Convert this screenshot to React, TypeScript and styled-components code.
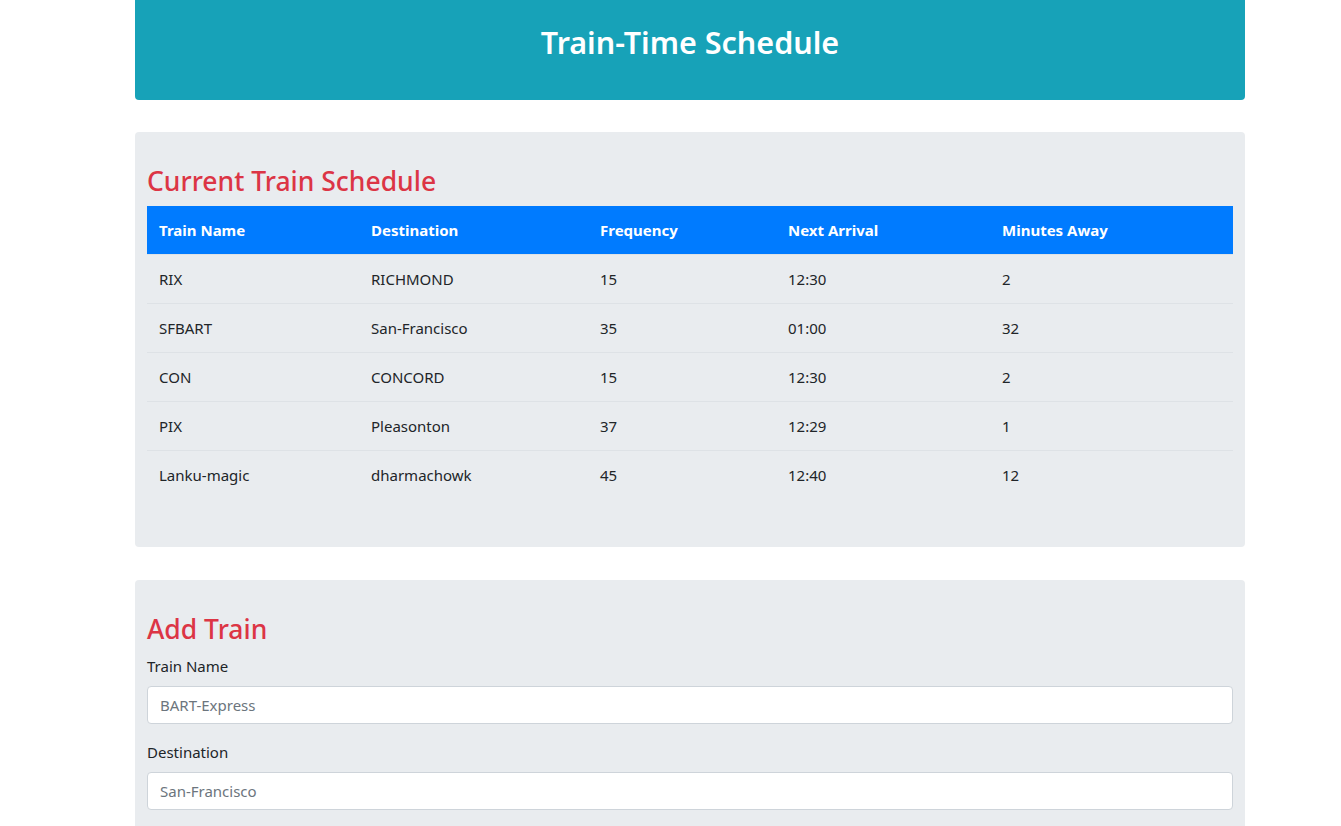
import styled, { createGlobalStyle } from 'styled-components';

interface Train {
  name: string;
  destination: string;
  frequency: number;
  nextArrival: string;
  minutesAway: number;
}

const trains: Train[] = [
  { name: 'RIX', destination: 'RICHMOND', frequency: 15, nextArrival: '12:30', minutesAway: 2 },
  { name: 'SFBART', destination: 'San-Francisco', frequency: 35, nextArrival: '01:00', minutesAway: 32 },
  { name: 'CON', destination: 'CONCORD', frequency: 15, nextArrival: '12:30', minutesAway: 2 },
  { name: 'PIX', destination: 'Pleasonton', frequency: 37, nextArrival: '12:29', minutesAway: 1 },
  { name: 'Lanku-magic', destination: 'dharmachowk', frequency: 45, nextArrival: '12:40', minutesAway: 12 },
];

const columns = [
  { label: 'Train Name', width: 212 },
  { label: 'Destination', width: 229 },
  { label: 'Frequency', width: 188 },
  { label: 'Next Arrival', width: 214 },
  { label: 'Minutes Away', width: 243 },
];

export default function App() {
  return (
    <>
      <GlobalStyle />
      <Page>
        <Header>
          <Title>Train-Time Schedule</Title>
        </Header>

        <Jumbotron>
          <SectionTitle>Current Train Schedule</SectionTitle>
          <Table>
            <colgroup>
              {columns.map((c) => (
                <col key={c.label} width={c.width} />
              ))}
            </colgroup>
            <thead>
              <tr>
                {columns.map((c) => (
                  <Th key={c.label}>{c.label}</Th>
                ))}
              </tr>
            </thead>
            <tbody>
              {trains.map((t) => (
                <tr key={t.name}>
                  <Td>{t.name}</Td>
                  <Td>{t.destination}</Td>
                  <Td>{t.frequency}</Td>
                  <Td>{t.nextArrival}</Td>
                  <Td>{t.minutesAway}</Td>
                </tr>
              ))}
            </tbody>
          </Table>
        </Jumbotron>

        <Jumbotron>
          <SectionTitle>Add Train</SectionTitle>
          <FormGroup>
            <Label htmlFor="trainName">Train Name</Label>
            <Input id="trainName" placeholder="BART-Express" />
          </FormGroup>
          <FormGroup>
            <Label htmlFor="destination">Destination</Label>
            <Input id="destination" placeholder="San-Francisco" />
          </FormGroup>
        </Jumbotron>
      </Page>
    </>
  );
}

const GlobalStyle = createGlobalStyle`
  body {
    margin: 0;
    background: #fff;
    color: #212529;
    font-family: "Noto Sans", "Open Sans", sans-serif;
    font-size: 15px;
    line-height: 1.5;
  }
  * {
    box-sizing: border-box;
  }
`;

const Page = styled.div`
  width: 1110px;
  margin-left: 135px;
  padding-bottom: 32px;
`;

const Header = styled.header`
  height: 100px;
  background-color: #17a2b8;
  border-radius: 0 0 4px 4px;
  display: flex;
  align-items: center;
  justify-content: center;
`;

const Title = styled.h1`
  margin: 0;
  color: #fff;
  font-size: 30.5px;
  font-weight: 600;
  line-height: 1.2;
  padding-bottom: 15px;
`;

const Jumbotron = styled.section`
  margin-top: 32px;
  padding: 32px 12px;
  background-color: #e9ecef;
  border-radius: 4px;

  & + & {
    margin-top: 33px;
  }
`;

const SectionTitle = styled.h2`
  margin: 0 0 8px;
  color: #dc3545;
  font-size: 26.5px;
  font-weight: 500;
  line-height: 34px;
`;

const Table = styled.table`
  width: 100%;
  margin-bottom: 16px;
  border-collapse: collapse;
  table-layout: fixed;
`;

const Th = styled.th`
  padding: 12px;
  background-color: #007bff;
  color: #fff;
  font-size: 15px;
  font-weight: 700;
  text-align: left;
  line-height: 24px;
`;

const Td = styled.td`
  padding: 12px;
  border-top: 1px solid #dee2e6;
  font-size: 15px;
  line-height: 24px;
`;

const FormGroup = styled.div`
  margin-bottom: 16px;
`;

const Label = styled.label`
  display: inline-block;
  margin-bottom: 8px;
  font-size: 15px;
  line-height: 24px;
`;

const Input = styled.input`
  display: block;
  width: 100%;
  height: 38px;
  padding: 6px 12px;
  border: 1px solid #ced4da;
  border-radius: 4px;
  background: #fff;
  color: #495057;
  font-family: inherit;
  font-size: 15px;

  &::placeholder {
    color: #6c757d;
  }
`;
